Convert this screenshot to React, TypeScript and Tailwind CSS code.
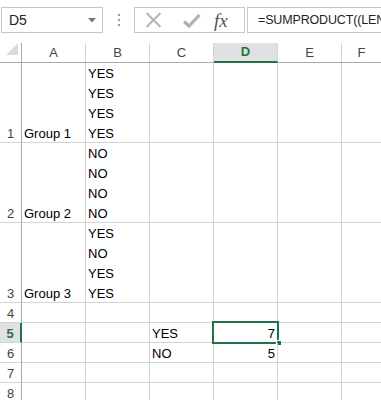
import React from "react";

const font = { fontFamily: '"Liberation Sans", Arial, sans-serif' };

type RowDef = {
  n: string;
  h: string;
  a?: string;
  b?: string[];
  c?: string;
  d?: string;
  sel?: boolean;
};

const rows: RowDef[] = [
  { n: "1", h: "h-[80px]", a: "Group 1", b: ["YES", "YES", "YES", "YES"] },
  { n: "2", h: "h-[80px]", a: "Group 2", b: ["NO", "NO", "NO", "NO"] },
  { n: "3", h: "h-[80px]", a: "Group 3", b: ["YES", "NO", "YES", "YES"] },
  { n: "4", h: "h-[20px]" },
  { n: "5", h: "h-[20px]", c: "YES", d: "7", sel: true },
  { n: "6", h: "h-[20px]", c: "NO", d: "5" },
  { n: "7", h: "h-[20px]" },
  { n: "8", h: "h-[20px]" },
];

const cell = "w-[64px] shrink-0 border-r border-b border-[#d4d4d4] flex flex-col justify-end";

function Line({ children }: { children?: React.ReactNode }) {
  return <div className="h-[20px] shrink-0 leading-[23px] whitespace-nowrap">{children}</div>;
}

export default function App() {
  return (
    <div className="w-[381px] h-[400px] overflow-hidden bg-white text-[13px] text-black" style={font}>
      {/* Formula bar */}
      <div className="h-[43px] flex items-start pt-[7px] pl-[1px]">
        <div className="w-[102px] h-[26px] border border-[#c6c6c6] flex items-center justify-between pl-[7px] pr-[6px]">
          <span className="text-[14px] text-[#222]">D5</span>
          <svg width="8" height="5" viewBox="0 0 8 5"><path d="M0 0h8L4 4.5z" fill="#777" /></svg>
        </div>
        <div className="w-[31px] h-[26px] flex flex-col items-center justify-center gap-[3px]">
          <div className="w-[2px] h-[2px] bg-[#9b9b9b]" />
          <div className="w-[2px] h-[2px] bg-[#9b9b9b]" />
          <div className="w-[2px] h-[2px] bg-[#9b9b9b]" />
        </div>
        <div className="w-[111px] h-[26px] border border-[#c6c6c6] flex items-center">
          <svg className="ml-[10px]" width="17" height="16" viewBox="0 0 17 16">
            <path d="M1.5 1L15.5 15M15.5 1L1.5 15" stroke="#b4b4b4" strokeWidth="2" fill="none" />
          </svg>
          <svg className="ml-[20px]" width="19" height="15" viewBox="0 0 19 15">
            <path d="M2 8.5L7 13L17.5 2" stroke="#b0b0b0" strokeWidth="3.2" fill="none" />
          </svg>
          <span className="ml-[13px] text-[19px] italic text-[#555] leading-none" style={{ fontFamily: '"Liberation Serif", "Times New Roman", serif' }}>
            fx
          </span>
        </div>
        <div className="ml-[2px] flex-1 h-[26px] border border-r-0 border-[#c6c6c6] flex items-center pl-[10px] whitespace-nowrap overflow-hidden text-[12.5px] tracking-[-0.15px] text-[#222]">
          =SUMPRODUCT((LEN
        </div>
      </div>

      {/* Column headers */}
      <div className="flex h-[20px] border-b border-[#ababab] text-[#444]">
        <div className="w-[22px] shrink-0 border-r border-[#ababab] relative">
          <svg className="absolute left-[6px] top-[0px]" width="12" height="12" viewBox="0 0 12 12">
            <path d="M12 0V12H0z" fill="#dadada" />
          </svg>
        </div>
        {["A", "B", "C"].map((l) => (
          <div key={l} className="w-[64px] shrink-0 border-r border-[#d4d4d4] flex items-center justify-center">{l}</div>
        ))}
        <div className="w-[64px] shrink-0 border-r border-[#d4d4d4] bg-[#e1e1e1] border-b-2 border-b-[#217346] -mb-[1px] flex items-center justify-center font-bold text-[#217346]">
          D
        </div>
        <div className="w-[64px] shrink-0 border-r border-[#d4d4d4] flex items-center justify-center">E</div>
        <div className="flex-1 flex items-center justify-center">F</div>
      </div>

      {/* Rows */}
      {rows.map((r) => (
        <div key={r.n} className={`flex ${r.h}`}>
          <div
            className={`w-[22px] shrink-0 border-b border-[#d4d4d4] flex flex-col justify-end items-center ${
              r.sel ? "bg-[#e1e1e1] border-r-2 border-r-[#217346] font-bold text-[#217346]" : "border-r border-r-[#ababab] text-[#444]"
            }`}
          >
            <Line>{r.n}</Line>
          </div>
          <div className={`${cell} pl-[2px]`}>{r.a && <Line>{r.a}</Line>}</div>
          <div className={`${cell} pl-[2px]`}>
            {(r.b ?? []).map((t, i) => (
              <Line key={i}>{t}</Line>
            ))}
          </div>
          <div className={`${cell} pl-[2px]`}>{r.c && <Line>{r.c}</Line>}</div>
          <div className={`${cell} items-end pr-[2px] relative`}>
            {r.d && <Line>{r.d}</Line>}
            {r.sel && (
              <>
                <div className="absolute -left-[2px] -top-[2px] w-[67px] h-[23px] border-2 border-[#217346]" />
                <div className="absolute left-[62px] top-[17px] w-[6px] h-[6px] bg-[#217346] border border-white" />
              </>
            )}
          </div>
          <div className={cell} />
          <div className="flex-1 border-b border-[#d4d4d4]" />
        </div>
      ))}
    </div>
  );
}
